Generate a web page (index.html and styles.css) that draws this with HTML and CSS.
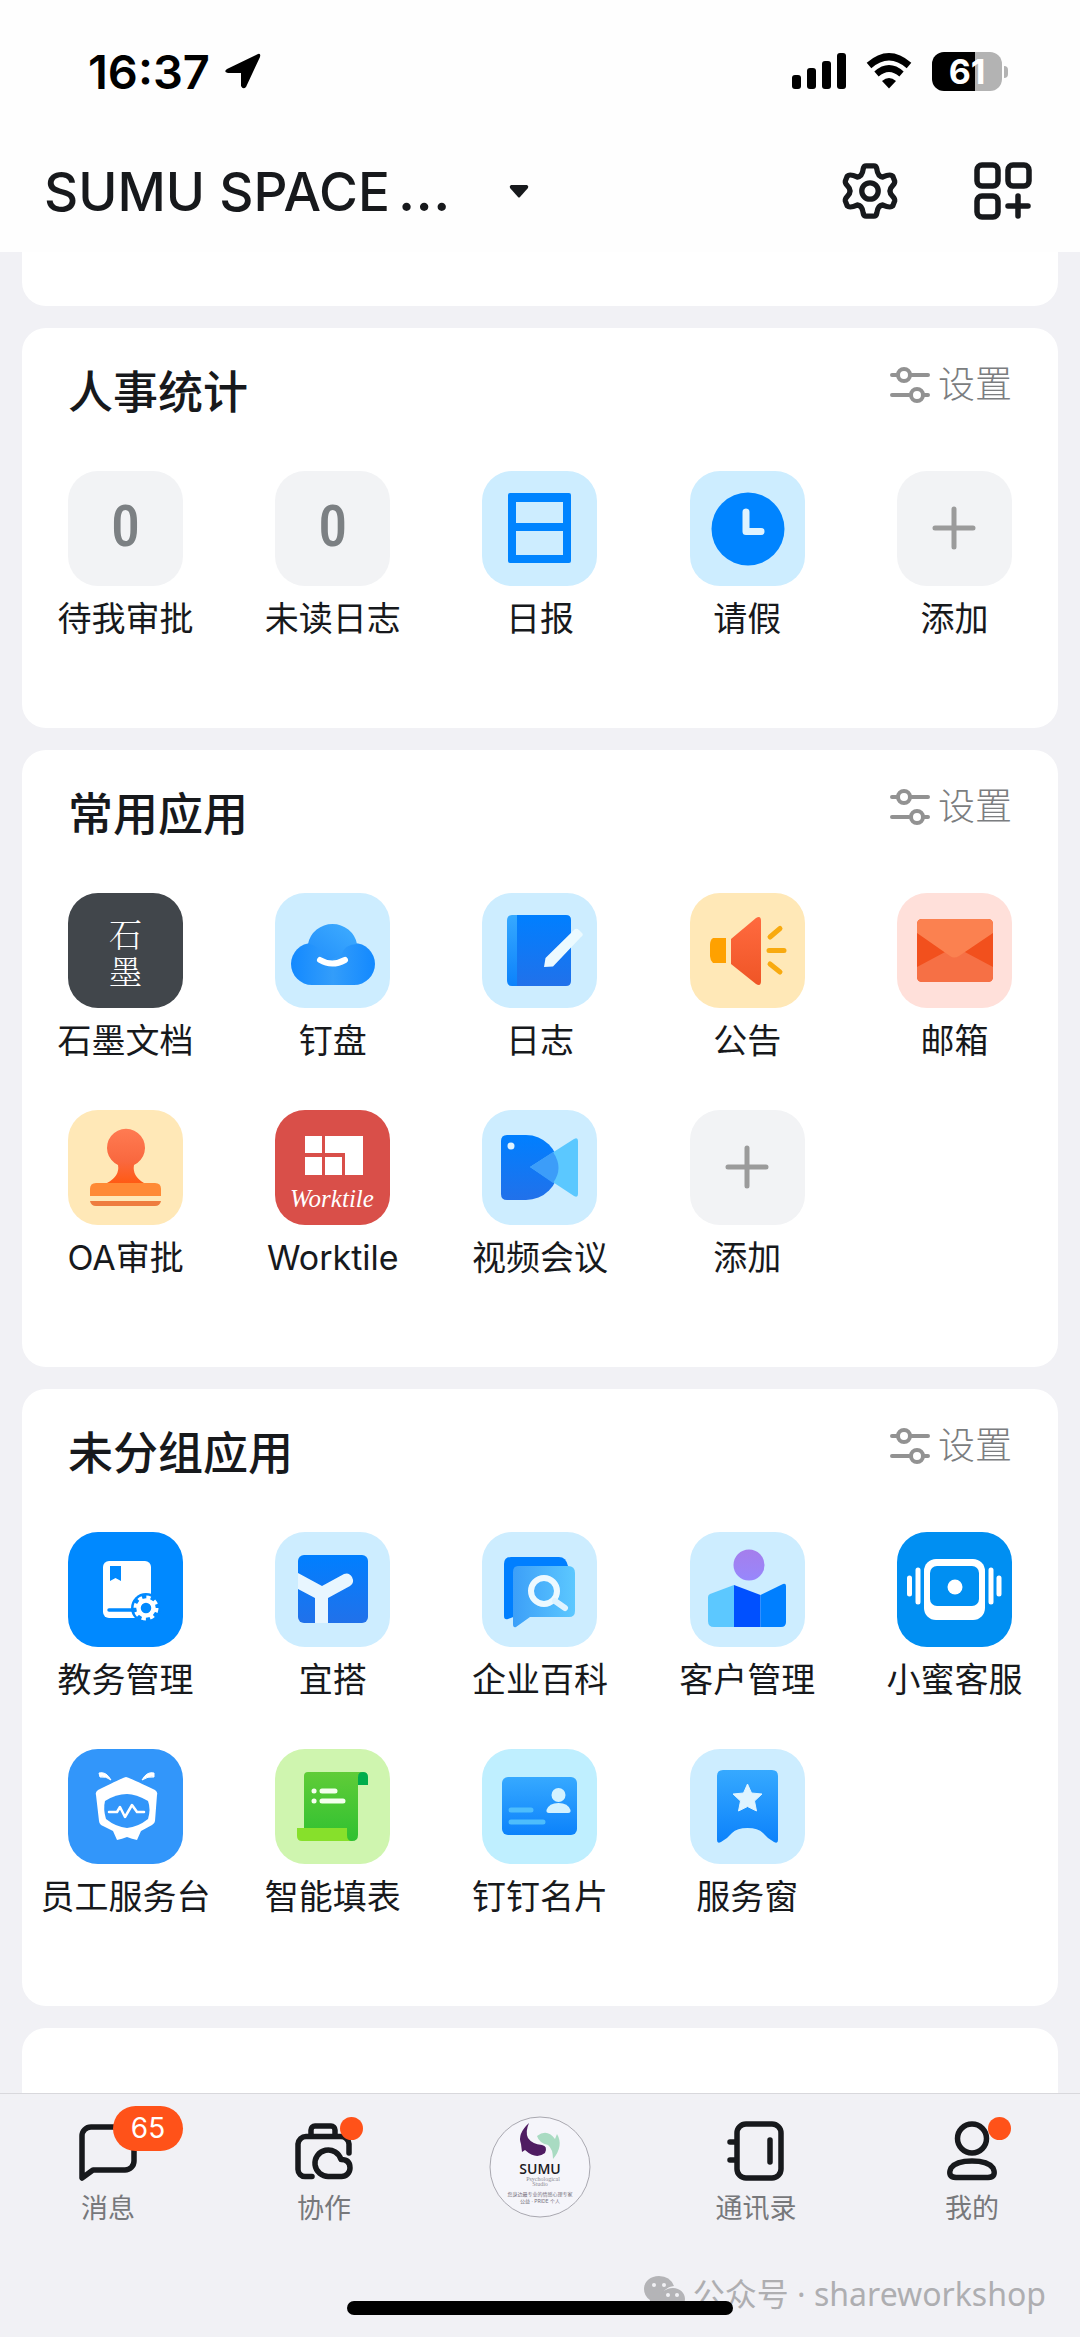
FILE: index.html
```html
<!DOCTYPE html>
<html lang="zh-CN">
<head>
    <meta charset="UTF-8">
    <meta name="viewport" content="width=device-width, initial-scale=1.0">
    <title>SUMU SPACE</title>
    <link rel="stylesheet" href="styles.css">
</head>
<body>

    <!-- Shared gradients and icons -->
    <svg class="defs" aria-hidden="true">
        <defs>
            <linearGradient id="blue" x1="0" y1="0" x2="0" y2="1">
                <stop offset="0" stop-color="#007fff"/>
                <stop offset="1" stop-color="#2171ea"/>
            </linearGradient>
            <linearGradient id="sky" x1="0" y1="0" x2="0" y2="1">
                <stop offset="0" stop-color="#36a9ff"/>
                <stop offset="1" stop-color="#0c82fb"/>
            </linearGradient>
            <linearGradient id="skyRight" x1="0" y1="0" x2="1" y2="0">
                <stop offset="0" stop-color="#3c9ff8"/>
                <stop offset="1" stop-color="#5cc8ff"/>
            </linearGradient>
            <linearGradient id="cloudTop" x1="0" y1="1" x2="1" y2="0">
                <stop offset="0" stop-color="#1f8dfb"/>
                <stop offset="1" stop-color="#40adff"/>
            </linearGradient>
            <linearGradient id="cloudBase" x1="0" y1="0" x2="1" y2="0">
                <stop offset="0" stop-color="#1389ff"/>
                <stop offset="0.5" stop-color="#339dfa"/>
                <stop offset="1" stop-color="#1389ff"/>
            </linearGradient>
            <linearGradient id="red" x1="0" y1="0" x2="0" y2="1">
                <stop offset="0" stop-color="#ff6a3f"/>
                <stop offset="1" stop-color="#ef5526"/>
            </linearGradient>
            <linearGradient id="stamp" x1="0" y1="0" x2="0" y2="1">
                <stop offset="0" stop-color="#ff7b52"/>
                <stop offset="0.6" stop-color="#f9683f"/>
                <stop offset="1" stop-color="#ff5a14"/>
            </linearGradient>
            <linearGradient id="green" x1="0" y1="0" x2="0" y2="1">
                <stop offset="0" stop-color="#60cc38"/>
                <stop offset="1" stop-color="#2fc131"/>
            </linearGradient>
            <linearGradient id="purple" x1="0" y1="0" x2="0" y2="1">
                <stop offset="0" stop-color="#a57eec"/>
                <stop offset="1" stop-color="#9787fc"/>
            </linearGradient>
        </defs>
        <symbol id="sliders" viewBox="0 0 40 36">
            <g fill="none" stroke="#929292" stroke-width="4" stroke-linecap="round">
                <path d="M2 8H7M21 8H38M2 28H19M34 28H38"/>
                <circle cx="14" cy="8" r="6"/>
                <circle cx="27" cy="28" r="6"/>
            </g>
        </symbol>
        <symbol id="plus" viewBox="0 0 115 115">
            <path d="M57 38V76M38 57H76" stroke="#9b9b9b" stroke-width="5" stroke-linecap="round"/>
        </symbol>
    </svg>

    <!-- Header -->
    <header class="header">
        <div class="status-bar">
            <div class="status-left">
                <span class="time">16:37</span>
                <svg width="38" height="38" viewBox="0 0 38 38"><path d="M3 17 34 2Q37 1 36 5L22 35Q19 38 17 34V21H4Q-1 20 3 17Z"/></svg>
            </div>
            <div class="status-right">
                <svg width="54" height="36" viewBox="0 0 54 36">
                    <rect x="0" y="22" width="9" height="14" rx="3"/>
                    <rect x="15" y="15" width="9" height="21" rx="3"/>
                    <rect x="30" y="8" width="9" height="28" rx="3"/>
                    <rect x="45" y="0" width="9" height="36" rx="3"/>
                </svg>
                <svg width="46" height="36" viewBox="0 0 46 36">
                    <path d="M3 12.500Q23-5 43 12.500" fill="none" stroke="#000" stroke-width="7"/>
                    <path d="M10.500 21Q23 10 35.500 21" fill="none" stroke="#000" stroke-width="6.500"/>
                    <path d="M16 28Q23 22 30 28L23 35.500Z"/>
                </svg>
                <div class="battery">61</div>
            </div>
        </div>
        <div class="title-bar">
            <button class="space-name" type="button">
                <span>SUMU SPACE</span><span class="dots">…</span>
                <svg class="caret" width="20" height="13" viewBox="0 0 20 13"><path d="M2 0H18Q20 1 19 3L11 12Q10 13 9 12L1 3Q0 1 2 0Z" fill="#17191c"/></svg>
            </button>
            <div class="title-actions">
                <button type="button" aria-label="设置">
                    <svg width="56" height="58" viewBox="0 0 58 60" fill="none" stroke="#17191c" stroke-width="5.500" stroke-linejoin="round">
                        <path d="M25 4H33Q35.500 4 36 7Q37 15 42 15.500Q50 12 52.500 14.500L54.500 19.500Q55 22 52.500 24.500Q47 30 52.500 35.500Q55 38 54.500 40.500L52.500 45.500Q50 48 42 44.500Q37 45 36 53Q35.500 56 33 56H25Q22.500 56 22 53Q21 45 16 44.500Q8 48 5.500 45.500L3.500 40.500Q3 38 5.500 35.500Q11 30 5.500 24.500Q3 22 3.500 19.500L5.500 14.500Q8 12 16 15.500Q21 15 22 7Q22.500 4 25 4Z"/>
                        <circle cx="29" cy="30" r="8.500"/>
                    </svg>
                </button>
                <button type="button" aria-label="添加应用">
                    <svg width="58" height="58" viewBox="0 0 58 58" fill="none" stroke="#17191c" stroke-width="5.500" stroke-linecap="round">
                        <rect x="3" y="3" width="21" height="21" rx="5"/>
                        <rect x="34" y="3" width="21" height="21" rx="5"/>
                        <rect x="3" y="34" width="21" height="21" rx="5"/>
                        <path d="M44 34V54M34 44H54"/>
                    </svg>
                </button>
            </div>
        </div>
    </header>

    <main class="main">
        <section class="card card-top"></section>

        <!-- HR -->
        <section class="card">
            <div class="card-head">
                <h2>人事统计</h2>
                <button class="setting" type="button"><svg width="40" height="36"><use href="#sliders"/></svg>设置</button>
            </div>
            <div class="grid">
                <a class="app" href="#"><span class="icon gray count">0</span>待我审批</a>
                <a class="app" href="#"><span class="icon gray count">0</span>未读日志</a>
                <a class="app" href="#">
                    <svg class="icon light" viewBox="0 0 115 115">
                        <path fill="#0084ff" fill-rule="evenodd" d="M28 22H87Q89 22 89 24V90Q89 92 87 92H28Q26 92 26 90V24Q26 22 28 22ZM34 31V52H81V31ZM34 60V84H81V60Z"/>
                    </svg>日报
                </a>
                <a class="app" href="#">
                    <svg class="icon light" viewBox="0 0 115 115">
                        <circle cx="58" cy="58" r="36.500" fill="#0084ff"/>
                        <path d="M56 41V60.500H71" fill="none" stroke="#dff3ff" stroke-width="7" stroke-linecap="round" stroke-linejoin="round"/>
                    </svg>请假
                </a>
                <a class="app" href="#"><svg class="icon gray"><use href="#plus"/></svg>添加</a>
            </div>
        </section>

        <!-- Frequently used -->
        <section class="card">
            <div class="card-head">
                <h2>常用应用</h2>
                <button class="setting" type="button"><svg width="40" height="36"><use href="#sliders"/></svg>设置</button>
            </div>
            <div class="grid">
                <a class="app" href="#"><span class="icon shimo"><span>石</span><span>墨</span></span>石墨文档</a>
                <a class="app" href="#">
                    <svg class="icon light" viewBox="0 0 115 115">
                        <rect x="16" y="50" width="84" height="42" rx="21" fill="url(#cloudBase)"/>
                        <path d="M33 51A25 25 0 0 1 82 51Q70 51 66 62L50 70Q46 52 33 51Z" fill="url(#cloudTop)"/>
                        <path d="M45 67Q57 74 70 67" fill="none" stroke="#fff" stroke-width="6" stroke-linecap="round"/>
                    </svg>钉盘
                </a>
                <a class="app" href="#">
                    <svg class="icon light" viewBox="0 0 115 115">
                        <path d="M30 22H35V93H30Q25 93 25 87V28Q25 22 30 22Z" fill="url(#sky)"/>
                        <path d="M35 22H84Q89 22 89 27V88Q89 93 84 93H35Z" fill="url(#blue)"/>
                        <path d="M62 74 63.500 65 93 36Q95 35 97 37L100 40Q102 42 99 44L71 73.500Z" fill="#ecfaff"/>
                    </svg>日志
                </a>
                <a class="app" href="#">
                    <svg class="icon yellow" viewBox="0 0 115 115">
                        <path d="M23 45H36V70H23Q20 67 20 63V52Q20 47 23 45Z" fill="#ffa100"/>
                        <path d="M41 46 66 25Q71 22 71 28V88Q71 94 66 91L41 71Z" fill="url(#red)"/>
                        <path d="M80 44 90 35.500M79 57.500H94M80 71 90 79" stroke="#f8aa10" stroke-width="5" stroke-linecap="round"/>
                    </svg>公告
                </a>
                <a class="app" href="#">
                    <svg class="icon pink" viewBox="0 0 115 115">
                        <rect x="20" y="26" width="76" height="63" rx="5" fill="#f2501d"/>
                        <path d="M20 74 50 58H66L96 74V84Q96 89 91 89H25Q20 89 20 84Z" fill="#f67045"/>
                        <path d="M20 40V31Q20 26 25 26H91Q96 26 96 31V40L62 63Q57 66 53 63Z" fill="#fb8150"/>
                    </svg>邮箱
                </a>
                <a class="app" href="#">
                    <svg class="icon yellow" viewBox="0 0 115 115">
                        <path d="M50 55A19 19 0 1 1 66 55Q64 66 76 73H39Q52 66 50 55Z" fill="url(#stamp)"/>
                        <path d="M28 73H87Q93 73 93 79V86H22V79Q22 73 28 73Z" fill="#ff8a36"/>
                        <path d="M22 91H93Q92 96 87 96H28Q23 96 22 91Z" fill="#ee7c3f"/>
                    </svg>OA审批
                </a>
                <a class="app" href="#">
                    <svg class="icon worktile" viewBox="0 0 115 115">
                        <path fill="#fff" d="M30 26H47V43H30ZM50 26H88V65H70V43H50ZM30 47H47V65H30ZM50 47H67V65H50Z"/>
                        <text x="57" y="97" text-anchor="middle">Worktile</text>
                    </svg>Worktile
                </a>
                <a class="app" href="#">
                    <svg class="icon light" viewBox="0 0 115 115">
                        <path d="M25 25H44A32.500 32.500 0 0 1 44 90H25Q19 90 19 84V31Q19 25 25 25Z" fill="url(#blue)"/>
                        <path d="M48 57 92 29Q96 27 96 31V84Q96 88 92 86Z" fill="#5bc8ff"/>
                        <path d="M48 57 71 42Q82 58 71 73Z" fill="#3c9df9"/>
                        <circle cx="29" cy="36" r="3.500" fill="#dff3ff"/>
                    </svg>视频会议
                </a>
                <a class="app" href="#"><svg class="icon gray"><use href="#plus"/></svg>添加</a>
            </div>
        </section>

        <!-- Ungrouped -->
        <section class="card">
            <div class="card-head">
                <h2>未分组应用</h2>
                <button class="setting" type="button"><svg width="40" height="36"><use href="#sliders"/></svg>设置</button>
            </div>
            <div class="grid">
                <a class="app" href="#">
                    <svg class="icon azure" viewBox="0 0 115 115">
                        <rect x="35" y="29" width="48" height="57" rx="6" fill="#fff"/>
                        <path d="M42 34H53V49L47.500 46 42 49Z" fill="#0089ff"/>
                        <path d="M41 78H68" stroke="#0089ff" stroke-width="3.500" stroke-linecap="round"/>
                        <circle cx="78" cy="76" r="15" fill="#0089ff"/>
                        <circle cx="78" cy="76" r="7.500" fill="none" stroke="#fff" stroke-width="4.500"/>
                        <circle cx="78" cy="76" r="10.500" fill="none" stroke="#fff" stroke-width="4" stroke-dasharray="4.200 4.050"/>
                    </svg>教务管理
                </a>
                <a class="app" href="#">
                    <svg class="icon light" viewBox="0 0 115 115">
                        <rect x="23" y="23" width="70" height="68" rx="6" fill="url(#blue)"/>
                        <path d="M23 41 47 54 69 42Q74 40 77 45Q80 51 75 54L53 66V91H40V66L23 57Z" fill="#e8f6ff"/>
                    </svg>宜搭
                </a>
                <a class="app" href="#">
                    <svg class="icon light" viewBox="0 0 115 115">
                        <path d="M29 25H77Q84 25 86 34L34 84 26 87Q22 88 22 84V32Q22 25 29 25Z" fill="#007fff"/>
                        <path d="M36 34H86Q93 34 93 41V79Q93 85 87 85H48L34 95Q31 96 31 92V40Q31 34 36 34Z" fill="url(#skyRight)"/>
                        <circle cx="62" cy="59" r="13" fill="none" stroke="#edf9ff" stroke-width="6"/>
                        <path d="M73 69 83 76" stroke="#dff3ff" stroke-width="6" stroke-linecap="round"/>
                    </svg>企业百科
                </a>
                <a class="app" href="#">
                    <svg class="icon light" viewBox="0 0 115 115">
                        <circle cx="59" cy="33" r="15.500" fill="url(#purple)"/>
                        <path d="M20 62 44 53V95H24Q18 95 18 89V65Q18 63 20 62Z" fill="#5cc8ff"/>
                        <path d="M44 53 70.500 63V95H44Z" fill="#0050ff"/>
                        <path d="M70.500 63 93 52Q96 51 96 54V90Q96 95 91 95H70.500Z" fill="#007fff"/>
                    </svg>客户管理
                </a>
                <a class="app" href="#">
                    <svg class="icon ocean" viewBox="0 0 115 115">
                        <rect x="27" y="27" width="61" height="61" rx="12" fill="#fff"/>
                        <rect x="33" y="34" width="49" height="40" rx="7" fill="#008ff2"/>
                        <circle cx="58" cy="55" r="7.500" fill="#fff"/>
                        <path d="M12.500 46V62M21 38V70M94 38V70M102 46V62" stroke="#fff" stroke-width="5" stroke-linecap="round"/>
                    </svg>小蜜客服
                </a>
                <a class="app" href="#">
                    <svg class="icon cobalt" viewBox="0 0 115 115">
                        <path d="M58 28Q60 28 87 41Q90 43 89 46L87 72Q87 74 84 76L73 82 69 91Q64 90 59 88Q54 90 49 91L45 82 33 76Q31 74 31 72L28 46Q27 43 30 41Q56 28 58 28Z" fill="#fff"/>
                        <path d="M59 45Q68 45 80 52Q83 60 80 70Q70 78 59 79Q48 78 38 70Q35 60 37 52Q48 45 59 45Z" fill="#3296fa"/>
                        <path d="M31 24Q38 22 43 31Q38 27 32 28ZM86 24Q79 22 74 31Q80 27 86 28Z" fill="#fff" stroke="#fff"/>
                        <path d="M41 63H49L52 58 57 68 64 56 69 63H76" fill="none" stroke="#fff" stroke-width="2.500" stroke-linejoin="round" stroke-linecap="round"/>
                    </svg>员工服务台
                </a>
                <a class="app" href="#">
                    <svg class="icon lime" viewBox="0 0 115 115">
                        <path d="M33 23H90Q83 23 83 30V86Q83 92 77 92H70L29 80V27Q29 23 33 23Z" fill="url(#green)"/>
                        <path d="M83 36V28Q83 23 88 23Q93 23 93 28V36Z" fill="#00ad4c"/>
                        <path d="M22 79H72V86Q72 92 77 92H27Q22 92 22 87Z" fill="#87e02b"/>
                        <path d="M39 42H39.100M39 52H39.100M47 42H60M47 52H68" stroke="#f4ffee" stroke-width="5" stroke-linecap="round"/>
                    </svg>智能填表
                </a>
                <a class="app" href="#">
                    <svg class="icon cyan" viewBox="0 0 115 115">
                        <rect x="20" y="28" width="75" height="58" rx="6" fill="url(#sky)"/>
                        <path d="M29 61H49M29 73H61" stroke="#4dbdfc" stroke-width="5" stroke-linecap="round"/>
                        <circle cx="76.500" cy="46" r="7" fill="#d3f2ff"/>
                        <path d="M76.500 54Q86 54 88.500 61Q89 64 86 64H67Q64 64 64.500 61Q67 54 76.500 54Z" fill="#d3f2ff"/>
                    </svg>钉钉名片
                </a>
                <a class="app" href="#">
                    <svg class="icon light" viewBox="0 0 115 115">
                        <path d="M33 21H82Q88 21 88 27V91Q88 95 84 93Q78 90 73 84Q68 79 57.500 79Q47 79 42 84Q37 90 31 93Q27 95 27 91V27Q27 21 33 21Z" fill="url(#sky)"/>
                        <path d="M57.500 35 61.500 44 72 45 64.500 52 66.500 62 57.500 57.500 48.500 62 50.500 52 43 45 53.500 44Z" fill="#dff4ff" stroke="#dff4ff" stroke-linejoin="round"/>
                    </svg>服务窗
                </a>
            </div>
        </section>

        <section class="card card-bottom"></section>
    </main>

    <!-- Tab bar -->
    <footer class="tab-bar">
        <nav class="tabs">
            <a class="tab" href="#">
                <span class="tab-icon">
                    <svg viewBox="0 0 60 60"><path d="M4 57V15A9 9 0 0 1 13 6H47A9 9 0 0 1 56 15V40A9 9 0 0 1 47 49H15Z"/></svg>
                    <span class="badge">65</span>
                </span>消息
            </a>
            <a class="tab" href="#">
                <span class="tab-icon">
                    <svg viewBox="0 0 60 60">
                        <path d="M18 55.500H11A7 7 0 0 1 4 48.500V23A8 8 0 0 1 12 15.500H47A8 8 0 0 1 55 23V32"/>
                        <path d="M17 15V9A4 4 0 0 1 21 5H37A4 4 0 0 1 41 9V15"/>
                        <path d="M35 55.500A13.300 13.300 0 1 1 47 38.500Q56 38.500 56 47A8.500 8.500 0 0 1 47.500 55.500Z"/>
                    </svg>
                    <span class="dot"></span>
                </span>协作
            </a>
            <a class="tab tab-logo" href="#" aria-label="SUMU">
                <svg width="102" height="102" viewBox="0 0 102 102">
                    <circle cx="51" cy="51" r="50" fill="#f5f5fa" stroke="#a9a8b0"/>
                    <path d="M40 7Q28 18 32 28L33 36 36 34Q47 44 56 37Q59 30 53 29Q43 28 39 22Q36 16 40 7Z" fill="#4f1c62"/>
                    <path d="M48 20Q58 12 66 23L68 18Q75 30 64 43Q64 33 59 29Q50 27 48 20Z" fill="#a9dbc2"/>
                    <text x="51" y="58" class="logo-name">SUMU</text>
                    <text x="54" y="65" class="logo-sub">Psychological</text>
                    <text x="51" y="70" class="logo-sub">Studio</text>
                    <text x="51" y="80" class="logo-line">您身边最专业的情感心理专家</text>
                    <text x="51" y="87" class="logo-line">公益 · PRIDE 个人</text>
                </svg>
            </a>
            <a class="tab" href="#">
                <span class="tab-icon">
                    <svg viewBox="0 0 60 60">
                        <rect x="11" y="3" width="44" height="54" rx="9"/>
                        <path d="M4 21H10M4 39H10M44 19V41"/>
                    </svg>
                </span>通讯录
            </a>
            <a class="tab" href="#">
                <span class="tab-icon">
                    <svg viewBox="0 0 60 60">
                        <circle cx="30" cy="17.500" r="14.500"/>
                        <path d="M30 40Q46 40 51 47Q55 56 46 56.500H14Q5 56 9 47Q14 40 30 40Z"/>
                    </svg>
                    <span class="dot"></span>
                </span>我的
            </a>
        </nav>
        <div class="watermark">
            <svg width="42" height="36" viewBox="0 0 42 36">
                <path d="M15 0C6 0 0 6 0 13Q0 20 6 24L5 30 11 26Q16 27 19 26 16 12 30 10 26 0 15 0Z" fill="#b4b4b7"/>
                <path d="M29 12C21 12 16 17 16 23S21 34 29 34L36 36V32Q41 29 41 23C41 17 36 12 29 12Z" fill="#b4b4b7"/>
                <g fill="#f1f1f5"><circle cx="10" cy="9" r="2"/><circle cx="20" cy="9" r="2"/><circle cx="24" cy="19" r="2"/><circle cx="33" cy="19" r="2"/></g>
            </svg>
            <span>公众号 · shareworkshop</span>
        </div>
        <div class="home-indicator"></div>
    </footer>

</body>
</html>
```
FILE: styles.css
```css
* {
    box-sizing: border-box;
}

body {
    margin: 0;
    min-height: 100vh;
    display: flex;
    flex-direction: column;
    background-color: #f1f1f5;
    color: #17191c;
    font-family: Inter, "Noto Sans CJK SC", sans-serif;
}

a {
    color: inherit;
    text-decoration: none;
}

button {
    padding: 0;
    border: none;
    background: none;
    color: inherit;
    font: inherit;
    cursor: pointer;
}

svg {
    display: block;
    flex-shrink: 0;
}

.defs {
    position: absolute;
    width: 0;
    height: 0;
}

/* Header */
.header {
    background-color: #fefefe;
    padding-bottom: 12px;
}

.status-bar {
    display: flex;
    align-items: center;
    justify-content: space-between;
    height: 142px;
    padding: 0 78px 0 88px;
    color: #000;
}

.status-left {
    display: flex;
    align-items: center;
    gap: 14px;
}

.time {
    font-size: 47px;
    font-weight: 600;
}

.status-right {
    display: flex;
    align-items: center;
    gap: 20px;
}

.battery {
    position: relative;
    width: 70px;
    height: 39px;
    border-radius: 12px;
    background: linear-gradient(to right, #000 61%, #b3b3b3 61%);
    color: #fff;
    font-size: 34px;
    font-weight: 700;
    line-height: 39px;
    text-align: center;
}

.battery::after {
    content: "";
    position: absolute;
    left: 72px;
    top: 14px;
    width: 4px;
    height: 12px;
    border-radius: 0 4px 4px 0;
    background-color: #b3b3b3;
}

.title-bar {
    display: flex;
    align-items: center;
    justify-content: space-between;
    height: 98px;
    padding: 0 48px 0 44px;
}

.space-name {
    display: flex;
    align-items: baseline;
    font-size: 53px;
    font-weight: 500;
    line-height: 60px;
}

.dots {
    margin-left: 8px;
    font-size: 58px;
}

.caret {
    align-self: center;
    margin-left: 58px;
}

.title-actions {
    display: flex;
    align-items: center;
    gap: 76px;
}

/* Cards */
.main {
    flex: 1;
    display: flex;
    flex-direction: column;
    gap: 22px;
    padding: 0 22px;
}

.card {
    padding-bottom: 40px;
    border-radius: 24px;
    background-color: #fff;
}

.card-top {
    height: 54px;
    padding: 0;
    border-radius: 0 0 24px 24px;
}

.card-bottom {
    flex: 1;
    min-height: 64px;
    padding: 0;
    border-radius: 24px 24px 0 0;
}

.card-head {
    display: flex;
    align-items: flex-start;
    justify-content: space-between;
    height: 143px;
    padding: 33px 46px 0;
}

h2 {
    margin: 0;
    font-size: 45px;
    font-weight: 500;
    line-height: 64px;
}

.setting {
    display: flex;
    align-items: center;
    gap: 8px;
    color: #7b7d80;
    font-size: 37px;
    font-weight: 300;
    line-height: 48px;
}

.grid {
    display: grid;
    grid-template-columns: repeat(5, 1fr);
}

.app {
    display: flex;
    flex-direction: column;
    align-items: center;
    gap: 9px;
    height: 217px;
    font-size: 34px;
    line-height: 48px;
    white-space: nowrap;
}

.icon {
    width: 115px;
    height: 115px;
    border-radius: 30px;
}

.light {
    background-color: #cdedff;
}

.gray {
    background-color: #f2f3f5;
}

.yellow {
    background-color: #ffe8b7;
}

.pink {
    background-color: #ffe0da;
}

.azure {
    background-color: #0089ff;
}

.ocean {
    background-color: #008ff2;
}

.cobalt {
    background-color: #3296fa;
}

.lime {
    background-color: #cff5af;
}

.cyan {
    background-color: #bfefff;
}

.count {
    color: #7c8083;
    font-family: "Roboto Condensed", "Liberation Sans Narrow", Roboto, sans-serif;
    font-size: 58px;
    font-weight: 500;
    line-height: 110px;
    text-align: center;
}

.shimo {
    display: flex;
    flex-direction: column;
    align-items: center;
    justify-content: center;
    background-color: #41464b;
    color: #fff;
    font-family: "Noto Serif CJK SC", "Noto Sans CJK SC", serif;
    font-size: 33px;
    font-weight: 300;
    line-height: 37px;
}

.worktile {
    background-color: #d94f49;
}

.worktile text {
    fill: #fff;
    font-family: "Liberation Serif", serif;
    font-size: 25px;
    font-style: italic;
}

/* Tab bar */
.tab-bar {
    position: relative;
    padding-bottom: 22px;
    border-top: 1px solid #d8d8dc;
    background-color: #f1f1f5;
}

.tabs {
    display: grid;
    grid-template-columns: repeat(5, 1fr);
    height: 207px;
}

.tab {
    display: flex;
    flex-direction: column;
    align-items: center;
    gap: 12px;
    padding-top: 27px;
    color: #77787b;
    font-size: 27px;
    line-height: 32px;
}

.tab-logo {
    padding-top: 22px;
}

.tab-icon {
    position: relative;
    width: 60px;
    height: 60px;
}

.tab-icon svg {
    fill: none;
    stroke: #17191c;
    stroke-width: 5.5;
    stroke-linecap: round;
    stroke-linejoin: round;
}

.badge {
    position: absolute;
    left: 35px;
    top: -15px;
    width: 70px;
    height: 45px;
    border-radius: 23px;
    background-color: #ff5219;
    color: #fff;
    font-size: 28px;
    line-height: 45px;
    text-align: center;
}

.dot {
    position: absolute;
    right: -9px;
    top: -4px;
    width: 23px;
    height: 23px;
    border-radius: 50%;
    background-color: #ff5219;
}

.logo-name {
    fill: #1c1a22;
    font-family: "Open Sans", sans-serif;
    font-size: 14px;
    font-weight: 600;
    text-anchor: middle;
}

.logo-sub {
    fill: #8d8b93;
    font-family: "Liberation Serif", serif;
    font-size: 6px;
    text-anchor: middle;
}

.logo-line {
    fill: #77717d;
    font-size: 5px;
    text-anchor: middle;
}

.watermark {
    position: absolute;
    right: 34px;
    bottom: 20px;
    display: flex;
    align-items: center;
    gap: 7px;
    color: #aeaeb1;
    font-family: "Noto Sans", "Noto Sans CJK SC", sans-serif;
    font-size: 32px;
    line-height: 46px;
}

.home-indicator {
    position: relative;
    width: 386px;
    height: 14px;
    margin: 0 auto;
    border-radius: 7px;
    background-color: #000;
}
```
